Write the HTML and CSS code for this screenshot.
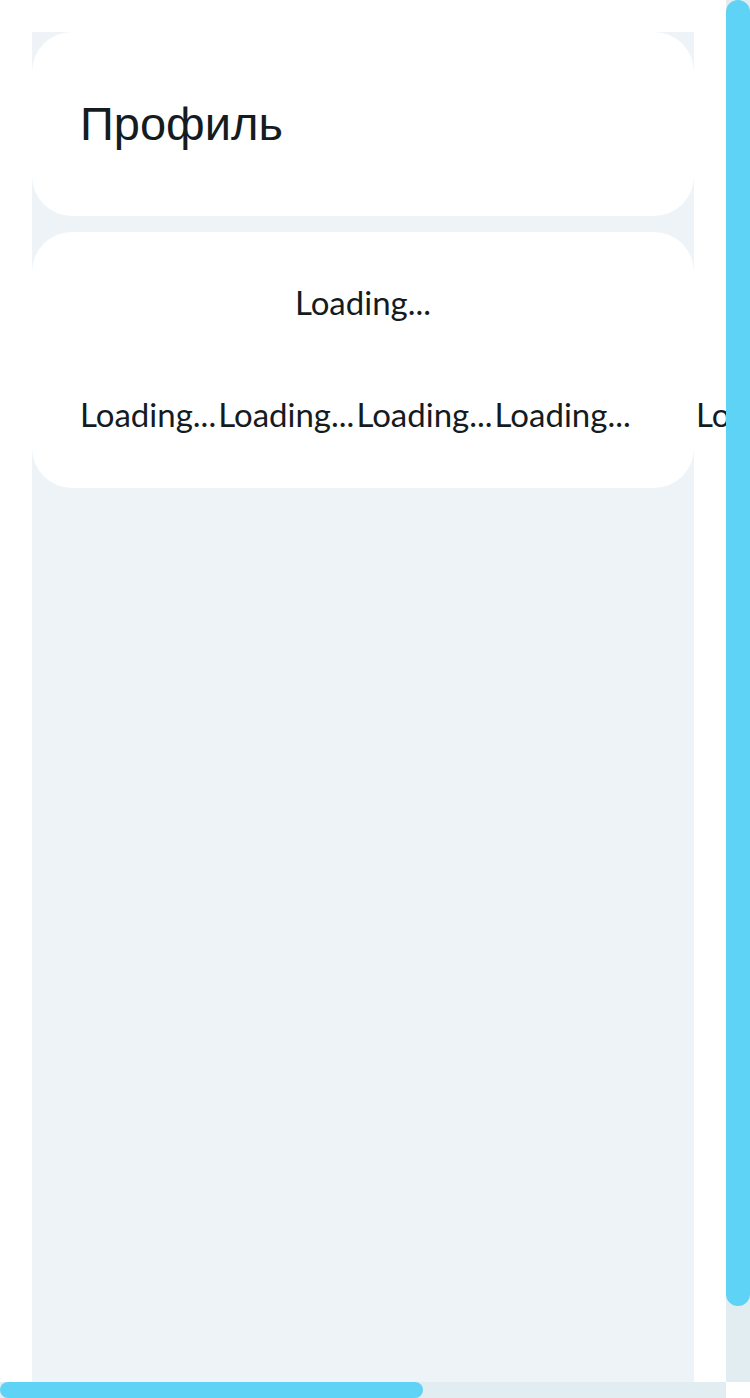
FILE: index.html
```html
<!DOCTYPE html>
<html lang="ru">
<head>
<meta charset="utf-8">
<meta name="viewport" content="width=device-width, initial-scale=1">
<title>Профиль</title>
<link rel="stylesheet" href="styles.css">
</head>
<body>
<div class="viewport">
  <div class="page">
    <main class="content">
      <header class="card card-title">
        <h1 class="title">Профиль</h1>
      </header>
      <section class="card card-body">
        <p class="status">Loading...</p>
        <div class="slides">
          <div class="slide"><span>Loading...</span><span>Loading...</span><span>Loading...</span><span>Loading...</span></div>
          <div class="slide"><span>Loading...</span></div>
        </div>
      </section>
    </main>
  </div>
  <div class="track track-vertical"><div class="thumb"></div></div>
  <div class="track track-horizontal"><div class="thumb"></div></div>
</div>
</body>
</html>
```

FILE: styles.css
```css
* {
  box-sizing: border-box;
}

body {
  margin: 0;
  background: #fff;
  color: #141c1f;
  font: 33px/48px Lato, sans-serif;
}

.viewport {
  display: grid;
  grid-template: minmax(0, 1fr) 16px / minmax(0, 1fr) 24px;
  height: 100vh;
}

.page {
  display: flex;
  padding: 32px 32px 0;
  overflow: hidden;
}

.content {
  display: flex;
  flex: 1;
  flex-direction: column;
  gap: 16px;
  min-width: 0;
  background: #edf3f6;
}

.card {
  padding: 48px;
  border-radius: 40px;
  background: #fff;
}

.card-body {
  padding: 46px 48px 50px;
}

.title {
  margin: 0;
  padding: 16px 0;
  font: 400 47px/56px "Liberation Sans", sans-serif;
}

.status {
  margin: 0 0 64px;
  text-align: center;
}

.slides {
  display: flex;
  gap: 50px;
}

.slide {
  display: flex;
  flex: 0 0 100%;
  gap: 2px;
}

.track {
  display: flex;
  background: #e1edf1;
}

.thumb {
  border-radius: 12px;
  background: #5fd3f5;
}

.track-vertical .thumb {
  width: 100%;
  height: 94.5%;
}

.track-horizontal .thumb {
  width: 58.2%;
  height: 100%;
}
```
